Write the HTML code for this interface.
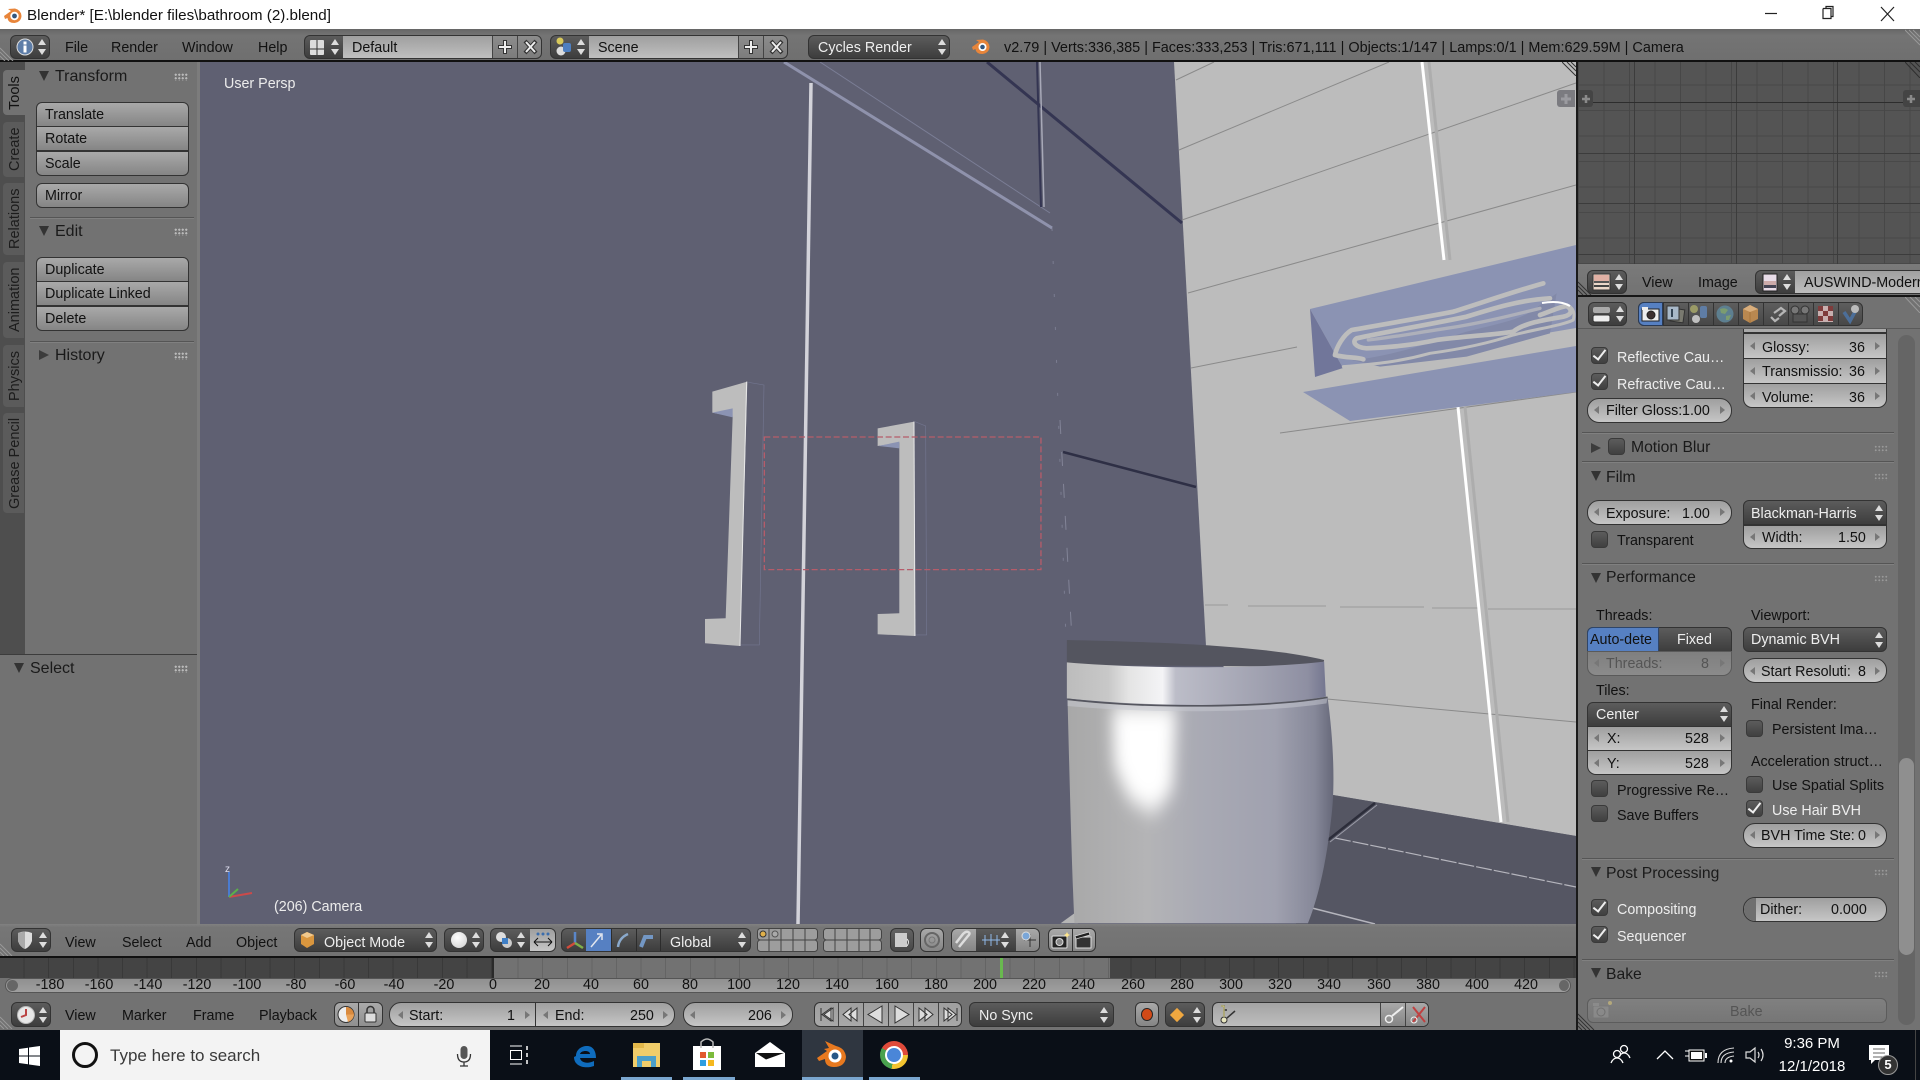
<!DOCTYPE html>
<html lang="en"><head><meta charset="utf-8"><title>Blender</title>
<style>
html,body{margin:0;padding:0;background:#727272}
#r{position:relative;width:1920px;height:1080px;overflow:hidden;background:#727272;font:14.3px "Liberation Sans",sans-serif;color:#111}
#r div,#r span,#r svg{position:absolute}
.t{white-space:nowrap;line-height:20px;height:20px}
.l{color:#eee}
.d{color:#555}
.tc{transform:translateX(-50%)}
.b{box-sizing:border-box;border:1px solid #333}
.g{background:linear-gradient(#a9a9a9,#858585)}
.n{background:linear-gradient(#9f9f9f,#c6c6c6)}
.k{background:linear-gradient(#5c5c5c,#3d3d3d)}
.m{background:linear-gradient(#636363,#484848)}
.rr{border-radius:6px}.pill{border-radius:12px}
.ud{width:8px;height:16px}
.ud:before,.ud:after{content:"";position:absolute;left:0;border-left:4px solid transparent;border-right:4px solid transparent}
.ud:before{top:0;border-bottom:6px solid #ddd}
.ud:after{bottom:0;border-top:6px solid #ddd}
.nl,.nr{width:0;height:0;border-top:4px solid transparent;border-bottom:4px solid transparent}
.nl{border-right:5px solid #777}.nr{border-left:5px solid #777}
.c{box-sizing:border-box;width:17px;height:17px;border-radius:4px;background:linear-gradient(#5c5c5c,#404040);border:1px solid #3a3a3a}
.c.on:after{content:"";position:absolute;left:4px;top:-1px;width:5px;height:11px;border-right:2.5px solid #eee;border-bottom:2.5px solid #eee;transform:rotate(38deg)}
.hr{height:1px;background:#555;box-shadow:0 1px 0 #808080}
.td{width:0;height:0;border-left:5px solid transparent;border-right:5px solid transparent;border-top:10px solid #333}
.tr{width:0;height:0;border-top:5px solid transparent;border-bottom:5px solid transparent;border-left:10px solid #3c3c3c}
.dots{width:14px;height:8px;background-image:radial-gradient(#bbb 1px,transparent 1.2px);background-size:3.5px 3.5px}
.dots.s{background-image:radial-gradient(#999 .9px,transparent 1.1px)}
.tab{left:3px;width:21px;background:#5b5b5b;border-radius:4px 0 0 4px}
.tab.a{background:#727272}
.vt{writing-mode:vertical-rl;transform:rotate(180deg);white-space:nowrap;left:5px;width:20px;line-height:20px;text-align:center;font-size:14.5px;color:#1c1c1c}
.h{font-size:16px;color:#1a1a1a}
.h2{font-size:15.700px;color:#1a1a1a}
</style></head><body><div id="r">

<!-- title bar -->
<div style="left:0;top:0;width:1920px;height:29px;background:#fff"></div>
<svg style="left:2px;top:4px" width="21" height="21" viewBox="0 0 21 21"><path d="M2 12 L9 7 L6 5 L13 4.500 Q19 6 19.500 12 Q19 18 12.500 19 Q6 19 5.500 14 L3 15 Z" fill="#e8853a"/><circle cx="12.500" cy="12" r="4.200" fill="#fff"/><circle cx="12.500" cy="12" r="2.400" fill="#33577f"/></svg>
<div class="t" style="left:27px;top:6px;font-size:15.200px;color:#111">Blender* [E:\blender files\bathroom (2).blend]</div>
<svg style="left:1760px;top:4px" width="140" height="22"><path d="M5 9.500H17" stroke="#222" stroke-width="1.200"/><path d="M63 4.500V14.500H71V4.500H63M66 4.500V2.500H73V12.500H71" fill="none" stroke="#222" stroke-width="1.200"/><path d="M121 3L134 17M134 3L121 17" stroke="#222" stroke-width="1.200"/></svg>

<!-- top header -->
<div style="left:0;top:29px;width:1920px;height:32px;background:linear-gradient(#666,#747474 20%,#6f6f6f)"></div>
<div style="left:0;top:60px;width:1920px;height:2px;background:#111"></div>
<svg style="left:0;top:47px" width="14" height="14"><path d="M0 1L13 14M0 5L9 14M0 9L5 14" stroke="#999" stroke-width="1"/></svg>
<svg style="left:1905px;top:29px" width="15" height="32"><path d="M0 1L15 16M4 1L15 12M8 1L15 8" stroke="#999" stroke-width="1"/></svg>
<div class="b k rr" style="left:10px;top:35px;width:40px;height:24px"></div>
<svg style="left:16px;top:38px" width="18" height="18"><circle cx="9" cy="9" r="8" fill="#5d7da8" stroke="#ddd"/><rect x="7.500" y="7.500" width="3" height="7" fill="#fff"/><rect x="7.500" y="3.500" width="3" height="3" fill="#fff"/></svg>
<span class="ud" style="left:38px;top:39px"></span>
<div class="t" style="left:65px;top:38px">File</div>
<div class="t" style="left:111px;top:38px">Render</div>
<div class="t" style="left:182px;top:38px">Window</div>
<div class="t" style="left:258px;top:38px">Help</div>
<div class="b k rr" style="left:304px;top:35px;width:238px;height:24px"></div>
<div style="left:343px;top:36px;width:149px;height:22px;background:linear-gradient(#9f9f9f,#bfbfbf)"></div>
<div style="left:492px;top:36px;width:49px;height:22px;background:linear-gradient(#8c8c8c,#7c7c7c);border-radius:0 5px 5px 0"></div>
<div class="t" style="left:352px;top:38px">Default</div>
<div style="left:492px;top:36px;width:1px;height:22px;background:#444"></div><div style="left:517px;top:36px;width:1px;height:22px;background:#444"></div>
<svg style="left:493px;top:36px" width="50" height="22"><path d="M12 4V18M5 11H19" stroke="#333" stroke-width="4"/><path d="M12 5V17M6 11H18" stroke="#eee" stroke-width="2"/><path d="M32 5L43 17M43 5L32 17" stroke="#333" stroke-width="4"/><path d="M33 6L42 16M42 6L33 16" stroke="#eee" stroke-width="2"/></svg>
<svg style="left:309px;top:39px" width="17" height="17"><rect x="1" y="1" width="14" height="15" rx="1" fill="#ddd"/><path d="M8 1V16M1 10H15" stroke="#333"/></svg>
<span class="ud" style="left:331px;top:39px"></span>
<div class="b k rr" style="left:550px;top:35px;width:238px;height:24px"></div>
<div style="left:589px;top:36px;width:149px;height:22px;background:linear-gradient(#9f9f9f,#bfbfbf)"></div>
<div style="left:738px;top:36px;width:49px;height:22px;background:linear-gradient(#8c8c8c,#7c7c7c);border-radius:0 5px 5px 0"></div>
<div class="t" style="left:598px;top:38px">Scene</div>
<div style="left:738px;top:36px;width:1px;height:22px;background:#444"></div><div style="left:763px;top:36px;width:1px;height:22px;background:#444"></div>
<svg style="left:739px;top:36px" width="50" height="22"><path d="M12 4V18M5 11H19" stroke="#333" stroke-width="4"/><path d="M12 5V17M6 11H18" stroke="#eee" stroke-width="2"/><path d="M32 5L43 17M43 5L32 17" stroke="#333" stroke-width="4"/><path d="M33 6L42 16M42 6L33 16" stroke="#eee" stroke-width="2"/></svg>
<svg style="left:555px;top:37px" width="20" height="20"><circle cx="6" cy="14" r="4.500" fill="#ddd"/><rect x="8" y="6" width="8" height="9" rx="2" fill="#4e7fc0"/><circle cx="5" cy="4" r="3.500" fill="#d8c95a"/></svg>
<span class="ud" style="left:577px;top:39px"></span>
<div class="b k rr" style="left:808px;top:35px;width:142px;height:24px"></div>
<div class="t l" style="left:818px;top:38px">Cycles Render</div>
<span class="ud" style="left:938px;top:39px"></span>
<svg style="left:971px;top:36px" width="21" height="20" viewBox="0 0 21 20"><path d="M1 11 L8 6 L5 4 L12 3.500 Q18 5 18.500 11 Q18 17 11.500 18 Q5 18 4.500 13 L2 14 Z" fill="#e8853a"/><circle cx="11.500" cy="11" r="4" fill="#fff"/><circle cx="11.500" cy="11" r="2.300" fill="#33577f"/></svg>
<div class="t" style="left:1004px;top:38px;font-size:14.450px">v2.79 | Verts:336,385 | Faces:333,253 | Tris:671,111 | Objects:1/147 | Lamps:0/1 | Mem:629.59M | Camera</div>

<!-- 3D viewport -->
<svg style="left:200px;top:62px" width="1376" height="862" viewBox="200 62 1376 862">
<defs>
<linearGradient id="lid" x1="0" x2="1" y1="0" y2="0"><stop offset="0" stop-color="#bcbcbc"/><stop offset=".16" stop-color="#c8c8c8"/><stop offset=".24" stop-color="#e4e4e4"/><stop offset=".37" stop-color="#f4f4f6"/><stop offset=".42" stop-color="#bcbdc8"/><stop offset=".75" stop-color="#a0a1b0"/><stop offset=".93" stop-color="#8e8fa2"/><stop offset="1" stop-color="#747690"/></linearGradient>
<linearGradient id="bod" x1="0" x2="1" y1="0" y2="0"><stop offset="0" stop-color="#a8a8a8"/><stop offset=".3" stop-color="#b4b4b6"/><stop offset=".5" stop-color="#a9aab4"/><stop offset=".78" stop-color="#a0a1af"/><stop offset=".93" stop-color="#868899"/><stop offset="1" stop-color="#666879"/></linearGradient>
<filter id="bl" x="-50%" y="-50%" width="200%" height="200%"><feGaussianBlur stdDeviation="22 32"/></filter>
</defs>
<rect x="200" y="62" width="1376" height="862" fill="#5f6072"/>
<polygon points="1174,62 1576,62 1576,836 1333,795 1206,646" fill="#bcbcbc"/>
<!-- wall lines -->
<g stroke="#8a8a8a" stroke-width="1" fill="none">
<path d="M1176 80L1214 62M1179 150L1389 62M1182 220L1576 83M1188 293L1576 185M1191 368L1297 347M1280 433L1576 392M1327 699L1576 722"/>
<path d="M1205 605H1228M1248 606H1326M1340 607H1424M1432 608H1478M1488 609H1576" stroke="#9a9a9a"/>
</g>
<!-- stripes -->
<path d="M1429 62L1450 260" stroke="#adadad" stroke-width="3"/>
<path d="M1422 62L1444 260" stroke="#fff" stroke-width="3"/>
<path d="M1465 407L1508 822" stroke="#adadad" stroke-width="3"/>
<path d="M1458 407L1501 822" stroke="#fff" stroke-width="3"/>
<!-- shelf -->
<polygon points="1310,309 1576,245 1576,328 1343,368" fill="#8b93b3"/>
<polygon points="1310,309 1343,368 1315,377" fill="#71769a"/>
<polygon points="1303,392 1576,346 1576,392 1350,421" fill="#8b93b3"/>
<g transform="translate(1280 260) scale(.3333)" fill="none" stroke="#bdbdbd" stroke-width="14" stroke-linejoin="round" stroke-linecap="round">
<path d="M215 300C300 295 420 260 560 215C640 195 720 180 760 150L830 100L810 220L560 290L300 320Z" fill="#8289a8" stroke="none"/>
<path d="M790 70C700 95 600 130 520 155C400 178 300 195 215 210C190 225 170 260 165 285C200 295 230 290 250 298"/>
<path d="M810 115C720 120 640 145 560 170C440 195 320 215 230 235C215 245 225 262 260 265C340 262 400 255 470 240C560 228 640 225 700 215C730 190 790 180 850 170C875 165 880 150 860 138C840 140 810 155 780 165"/>
<path d="M780 145C700 165 600 190 500 205C400 220 340 232 265 240" stroke="#aeb0ba" stroke-width="10"/>
<path d="M190 320C290 312 360 305 450 280C560 265 640 245 700 225C780 205 850 195 880 180C885 160 882 145 862 135" stroke-width="9"/>
</g>
<path d="M1542 303Q1560 300 1570 306" stroke="#fff" stroke-width="2" fill="none"/>
<!-- door lines -->
<path d="M820 62L1050 213" stroke="#7b7e96" stroke-width="1"/>
<path d="M784 62L1052 228" stroke="#8f92ac" stroke-width="3"/>
<path d="M811 83L798 924" stroke="#d3d3da" stroke-width="3.500"/>
<path d="M987 62L1182 223" stroke="#343552" stroke-width="3"/>
<path d="M1037 62L1041 207" stroke="#343552" stroke-width="2"/>
<path d="M1040 62L1044 207" stroke="#a8a9b8" stroke-width="1.500"/>
<path d="M1063 452L1196 487" stroke="#2e2f45" stroke-width="2.500"/>
<path d="M1052 228L1066 640" stroke="#8d8fa5" stroke-width="1" stroke-dasharray="3 30" opacity=".6"/>
<path d="M1060 420L1072 640" stroke="#9a9cb0" stroke-width="1" stroke-dasharray="14 18" opacity=".6"/>
<!-- handles -->
<g transform="translate(660 340) scale(.3333)">
<path d="M265 127L312 135L298 915H240" fill="none" stroke="#72758f" stroke-width="2"/>
<polygon points="157,155 262,125 240,918 135,910 135,837 197,835 218,230 157,218" fill="#bdbdbd"/>
<polygon points="157,218 218,205 218,232" fill="#8b93b3"/>
<path d="M260 125L240 918" stroke="#e8e8e8" stroke-width="3"/>
<path d="M765 245L797 258L800 885H765" fill="none" stroke="#72758f" stroke-width="2"/>
<polygon points="653,265 763,245 765,888 653,883 653,822 718,820 718,308 653,318" fill="#bdbdbd"/>
<polygon points="655,318 718,305 718,325" fill="#8b93b3"/>
<path d="M762 245L765 888" stroke="#e8e8e8" stroke-width="3"/>
<rect x="313" y="291" width="830" height="398" fill="none" stroke="#b65c6a" stroke-width="4" stroke-dasharray="18 8"/>
</g>
<!-- floor -->
<polygon points="1333,795 1576,836 1576,924 1296,924 1320,800" fill="#555663"/>
<path d="M1335 838L1576 887" stroke="#b5b5bd" stroke-width="1.200" stroke-dasharray="16 2"/>
<path d="M1312 908L1375 924" stroke="#b5b5bd" stroke-width="1.500"/>
<path d="M1328 840L1375 803" stroke="#2c2d3a" stroke-width="2.500"/>
<path d="M1330 842L1377 805" stroke="#9b9ca8" stroke-width="1"/>
<!-- toilet -->
<g transform="translate(1040 600) scale(.3444 .3333)">
<path d="M78 120C300 125 650 135 825 180L820 200L78 195Z" fill="#54555f"/>
<path d="M100 940L60 970H110Z" fill="#b5b5b5"/>
<path d="M80 300C300 325 650 325 835 292C852 420 858 560 845 660C830 800 805 900 778 970H100C92 800 85 500 80 300Z" fill="url(#bod)"/>
<path d="M210 320L395 320L385 570L330 640L260 600L215 500Z" fill="#fff" filter="url(#bl)"/>
<path d="M80 300C300 325 650 325 835 292L832 310C650 340 300 340 80 318Z" fill="#c8c9d2" opacity=".5"/>
<path d="M78 187C300 207 650 207 825 185L830 290C650 325 300 320 78 295Z" fill="url(#lid)"/>
<path d="M80 298C300 325 650 325 835 292" fill="none" stroke="#55565f" stroke-width="5"/>
</g>
<!-- axis -->
<g fill="none" stroke-width="2"><path d="M229 897V872" stroke="#4a7bd0"/><path d="M229 897L252 893" stroke="#cc4a4a"/><path d="M229 897L238 889" stroke="#5bb04a"/></g>
</svg>
<div class="t" style="left:224px;top:74px;color:#ececec">User Persp</div>
<div class="t" style="left:225px;top:860px;font-size:10px;color:#dde">z</div>
<div class="t" style="left:274px;top:897px;color:#ececec">(206) Camera</div>
<div style="left:1557px;top:90px;width:18px;height:17px;background:#7b7b80;border-radius:3px 0 0 3px"></div>
<svg style="left:1560px;top:93px" width="12" height="12"><path d="M6 1V11M1 6H11" stroke="#9b9ba0" stroke-width="3"/></svg>
<svg style="left:1562px;top:62px" width="14" height="14"><path d="M0 0L14 14M5 0L14 9M9 0L14 5" stroke="#333" stroke-width="1"/></svg>

<!-- left tool shelf -->
<div style="left:0;top:62px;width:198px;height:592px;background:#727272"></div>
<div style="left:197px;top:62px;width:3px;height:862px;background:#7c7c7c"></div>
<div style="left:0;top:62px;width:25px;height:592px;background:#4e4e4e"></div>
<div style="left:25px;top:62px;width:172px;height:592px;background:#727272"></div>
<div class="tab" style="top:122px;height:55px"></div>
<div class="tab" style="top:183px;height:72px"></div>
<div class="tab" style="top:262px;height:76px"></div>
<div class="tab" style="top:345px;height:62px"></div>
<div class="tab" style="top:413px;height:100px"></div>
<div class="tab a" style="top:70px;height:45px;width:22px"></div>
<div class="vt" style="top:72px;height:42px;color:#111">Tools</div>
<div class="vt" style="top:124px;height:50px">Create</div>
<div class="vt" style="top:186px;height:66px">Relations</div>
<div class="vt" style="top:265px;height:70px">Animation</div>
<div class="vt" style="top:349px;height:54px">Physics</div>
<div class="vt" style="top:416px;height:94px">Grease Pencil</div>

<div class="td" style="left:39px;top:71px"></div>
<div class="t h" style="left:55px;top:67px">Transform</div>
<div class="dots" style="left:174px;top:73px"></div>
<div class="b g" style="left:36px;top:102px;width:153px;height:25px;border-radius:6px 6px 0 0"></div>
<div class="b g" style="left:36px;top:126px;width:153px;height:25px"></div>
<div class="b g" style="left:36px;top:151px;width:153px;height:25px;border-radius:0 0 6px 6px"></div>
<div class="t" style="left:45px;top:105px">Translate</div>
<div class="t" style="left:45px;top:129px">Rotate</div>
<div class="t" style="left:45px;top:154px">Scale</div>
<div class="b g rr" style="left:36px;top:183px;width:153px;height:25px"></div>
<div class="t" style="left:45px;top:186px">Mirror</div>
<div class="hr" style="left:30px;top:217px;width:164px"></div>
<div class="td" style="left:39px;top:226px"></div>
<div class="t h" style="left:55px;top:222px">Edit</div>
<div class="dots" style="left:174px;top:228px"></div>
<div class="b g" style="left:36px;top:257px;width:153px;height:25px;border-radius:6px 6px 0 0"></div>
<div class="b g" style="left:36px;top:281px;width:153px;height:25px"></div>
<div class="b g" style="left:36px;top:306px;width:153px;height:25px;border-radius:0 0 6px 6px"></div>
<div class="t" style="left:45px;top:260px">Duplicate</div>
<div class="t" style="left:45px;top:284px">Duplicate Linked</div>
<div class="t" style="left:45px;top:309px">Delete</div>
<div class="hr" style="left:30px;top:341px;width:164px"></div>
<div class="tr" style="left:39px;top:350px"></div>
<div class="t h" style="left:55px;top:346px">History</div>
<div class="dots" style="left:174px;top:352px"></div>

<!-- select panel -->
<div style="left:0;top:654px;width:197px;height:270px;background:#727272;border-top:1px solid #3c3c3c;box-sizing:border-box"></div>
<div class="td" style="left:14px;top:663px"></div>
<div class="t h" style="left:30px;top:659px">Select</div>
<div class="dots" style="left:174px;top:665px"></div>

<!-- 3D header -->
<div style="left:0;top:924px;width:1577px;height:33px;background:linear-gradient(#808080,#767676 10%,#727272)"></div>
<div style="left:0;top:956px;width:1577px;height:2px;background:#111"></div>
<svg style="left:0;top:943px" width="13" height="13"><path d="M0 1L12 13M0 5L8 13M0 9L4 13" stroke="#999"/></svg>
<div class="b k rr" style="left:11px;top:928px;width:40px;height:24px"></div>
<svg style="left:15px;top:930px" width="20" height="20"><path d="M3 3Q10 0 17 3V11Q15 17 10 19Q5 17 3 11Z" fill="#ddd"/><path d="M10 1.500V19Q5 17 3 11V3Z" fill="#aaa"/></svg>
<span class="ud" style="left:39px;top:932px"></span>
<div class="t" style="left:65px;top:933px">View</div>
<div class="t" style="left:122px;top:933px">Select</div>
<div class="t" style="left:186px;top:933px">Add</div>
<div class="t" style="left:236px;top:933px">Object</div>
<div class="b k rr" style="left:294px;top:928px;width:143px;height:24px"></div>
<svg style="left:299px;top:931px" width="17" height="18"><path d="M8 1L15 4V13L8 17L2 13V4Z" fill="#d9963e"/><path d="M2 4L8 7L15 4L8 1Z" fill="#f0c88c"/></svg>
<div class="t l" style="left:324px;top:933px">Object Mode</div>
<span class="ud" style="left:425px;top:932px"></span>
<div class="b k rr" style="left:444px;top:928px;width:40px;height:24px"></div>
<div style="left:451px;top:932px;width:16px;height:16px;border-radius:50%;background:radial-gradient(circle at 40% 35%,#fff,#ccc)"></div>
<span class="ud" style="left:472px;top:932px"></span>
<div class="b k rr" style="left:490px;top:928px;width:66px;height:24px"></div>
<div class="n" style="left:530px;top:929px;width:25px;height:22px;border-radius:0 5px 5px 0"></div>
<svg style="left:495px;top:931px" width="18" height="18"><circle cx="6" cy="6" r="5" fill="#ddd"/><circle cx="12" cy="12" r="5" fill="#ccc"/><rect x="7" y="7" width="6" height="6" fill="#3f7fc6"/></svg>
<span class="ud" style="left:517px;top:932px"></span>
<svg style="left:531px;top:931px" width="24" height="18"><path d="M3 11H21M3 11L7 7M3 11L7 15M21 11L17 7M21 11L17 15" stroke="#111" fill="none"/><circle cx="7" cy="3" r="1.500" fill="#3b6dad"/><circle cx="12" cy="3" r="1.500" fill="#3b6dad"/><circle cx="17" cy="3" r="1.500" fill="#3b6dad"/></svg>
<div class="b k rr" style="left:561px;top:928px;width:190px;height:24px"></div>
<div style="left:586px;top:929px;width:25px;height:22px;background:#5680c2"></div>
<svg style="left:563px;top:930px" width="96" height="20"><path d="M12 2V13" stroke="#5a86c8" stroke-width="2.500"/><path d="M12 13L4 18" stroke="#d24b3a" stroke-width="2.500"/><path d="M12 13L20 18" stroke="#7fb04a" stroke-width="2.500"/><path d="M28 17L38 5M34 4H39V10" stroke="#e2e6ee" fill="none" stroke-width="1.500"/><path d="M55 17Q56 8 65 4" stroke="#8aa9cc" fill="none" stroke-width="2.500"/><path d="M78 17L82 7H90" stroke="#7397c4" fill="none" stroke-width="4"/></svg>
<div style="left:611px;top:929px;width:1px;height:22px;background:#2c2c2c"></div><div style="left:636px;top:929px;width:1px;height:22px;background:#2c2c2c"></div><div style="left:660px;top:929px;width:1px;height:22px;background:#2c2c2c"></div>
<div class="t l" style="left:670px;top:933px">Global</div>
<span class="ud" style="left:738px;top:932px"></span>
<svg style="left:757px;top:928px" width="130" height="24" fill="#9d9d9d" stroke="#444"><rect x=".5" y=".5" width="60" height="11.500" rx="3"/><rect x=".5" y="12" width="60" height="11.500" rx="3"/><path d="M12 1V23M24 1V23M36 1V23M48 1V23"/><rect x="66.500" y=".5" width="58" height="11.500" rx="3"/><rect x="66.500" y="12" width="58" height="11.500" rx="3"/><path d="M78 1V23M90 1V23M102 1V23M113 1V23"/><circle cx="6" cy="6" r="3" fill="#e0b04a" stroke="#333"/><circle cx="18" cy="6" r="3" fill="#aaa" stroke="#555"/></svg>
<div class="b m rr" style="left:890px;top:928px;width:24px;height:24px"></div>
<svg style="left:893px;top:931px" width="18" height="18"><rect x="2" y="2" width="12" height="14" fill="#ccc"/><path d="M14 8Q17 11 14 15" stroke="#eee" fill="none"/></svg>
<div class="b g rr" style="left:920px;top:928px;width:24px;height:24px"></div>
<svg style="left:923px;top:931px" width="18" height="18"><circle cx="9" cy="9" r="7" fill="none" stroke="#666" stroke-width="2"/><circle cx="9" cy="9" r="3" fill="none" stroke="#777"/></svg>
<div class="b k rr" style="left:951px;top:928px;width:89px;height:24px"></div>
<div class="g" style="left:952px;top:929px;width:24px;height:22px;border-radius:5px 0 0 5px"></div>
<div class="g" style="left:1016px;top:929px;width:23px;height:22px;border-radius:0 5px 5px 0"></div>
<svg style="left:952px;top:930px" width="88" height="20"><path d="M7 17L16 6Q19 3 16 2Q14 1 11 4L4 13" stroke="#ddd" fill="none" stroke-width="2.500"/><path d="M30 10H48M33 5V15M39 4V16M45 5V15" stroke="#8fb8e8" fill="none"/><path d="M72 10H84M78 4V17" stroke="#333"/><circle cx="74" cy="6" r="4" fill="#7aa6d8" stroke="#ddd"/></svg>
<span class="ud" style="left:1001px;top:932px"></span>
<div class="b g rr" style="left:1048px;top:928px;width:48px;height:24px"></div>
<div style="left:1072px;top:929px;width:1px;height:22px;background:#333"></div>
<svg style="left:1051px;top:930px" width="44" height="20"><rect x="1" y="6" width="15" height="12" rx="1" fill="#222" stroke="#ddd"/><circle cx="8.500" cy="12" r="3.500" fill="#888" stroke="#ddd"/><path d="M16 2l1 2 2 1-2 1-1 2-1-2-2-1 2-1z" fill="#ffe58a"/><rect x="25" y="7" width="15" height="11" fill="#333" stroke="#ddd"/><path d="M24 6L38 2L39 5L25 9Z" fill="#222" stroke="#ddd" stroke-width=".7"/></svg>

<!-- timeline -->
<div style="left:0;top:958px;width:1577px;height:20px;background:#444"></div>
<div style="left:0;top:958px;width:1577px;height:20px;background:repeating-linear-gradient(90deg,transparent 0 23.600px,rgba(0,0,0,.16) 23.600px 24.600px)"></div>
<div style="left:493px;top:958px;width:617px;height:20px;background:#727272"></div>
<div style="left:493px;top:958px;width:617px;height:20px;background:repeating-linear-gradient(90deg,rgba(0,0,0,.12) 0 1px,transparent 1px 24.600px)"></div>
<div style="left:492px;top:958px;width:2px;height:20px;background:#2a2a2a"></div>
<div style="left:1000px;top:958px;width:3px;height:20px;background:#69b94f"></div>
<div style="left:0;top:978px;width:1577px;height:17px;background:#727272"></div>
<div class="b" style="left:5px;top:978px;width:1566px;height:15px;border-radius:8px;background:linear-gradient(#909090,#9f9f9f);border-color:#555"></div>
<div style="left:7px;top:980px;width:11px;height:11px;border-radius:50%;background:#666"></div>
<div style="left:1559px;top:980px;width:10px;height:11px;border-radius:50%;background:#666"></div>
<div class="t tc" style="left:50px;top:975px">-180</div><div class="t tc" style="left:99px;top:975px">-160</div><div class="t tc" style="left:148px;top:975px">-140</div><div class="t tc" style="left:197px;top:975px">-120</div><div class="t tc" style="left:247px;top:975px">-100</div><div class="t tc" style="left:296px;top:975px">-80</div><div class="t tc" style="left:345px;top:975px">-60</div><div class="t tc" style="left:394px;top:975px">-40</div><div class="t tc" style="left:444px;top:975px">-20</div><div class="t tc" style="left:493px;top:975px">0</div><div class="t tc" style="left:542px;top:975px">20</div><div class="t tc" style="left:591px;top:975px">40</div><div class="t tc" style="left:641px;top:975px">60</div><div class="t tc" style="left:690px;top:975px">80</div><div class="t tc" style="left:739px;top:975px">100</div><div class="t tc" style="left:788px;top:975px">120</div><div class="t tc" style="left:837px;top:975px">140</div><div class="t tc" style="left:887px;top:975px">160</div><div class="t tc" style="left:936px;top:975px">180</div><div class="t tc" style="left:985px;top:975px">200</div><div class="t tc" style="left:1034px;top:975px">220</div><div class="t tc" style="left:1083px;top:975px">240</div><div class="t tc" style="left:1133px;top:975px">260</div><div class="t tc" style="left:1182px;top:975px">280</div><div class="t tc" style="left:1231px;top:975px">300</div><div class="t tc" style="left:1280px;top:975px">320</div><div class="t tc" style="left:1329px;top:975px">340</div><div class="t tc" style="left:1379px;top:975px">360</div><div class="t tc" style="left:1428px;top:975px">380</div><div class="t tc" style="left:1477px;top:975px">400</div><div class="t tc" style="left:1526px;top:975px">420</div>

<!-- timeline header -->
<div style="left:0;top:995px;width:1577px;height:35px;background:#727272"></div>
<svg style="left:0;top:1016px" width="13" height="13"><path d="M0 1L12 13M0 5L8 13M0 9L4 13" stroke="#999"/></svg>
<div class="b k rr" style="left:11px;top:1002px;width:40px;height:25px"></div>
<svg style="left:16px;top:1005px" width="20" height="20"><circle cx="10" cy="10" r="8.500" fill="#e8e8e8" stroke="#bbb"/><path d="M10 4V10L5 12" stroke="#b44" fill="none" stroke-width="2"/></svg>
<span class="ud" style="left:39px;top:1007px"></span>
<div class="t" style="left:65px;top:1006px">View</div>
<div class="t" style="left:122px;top:1006px">Marker</div>
<div class="t" style="left:193px;top:1006px">Frame</div>
<div class="t" style="left:259px;top:1006px">Playback</div>
<div class="b n rr" style="left:334px;top:1002px;width:49px;height:25px;background:linear-gradient(#aaa,#8f8f8f)"></div>
<div style="left:358px;top:1003px;width:1px;height:23px;background:#333"></div>
<svg style="left:336px;top:1004px" width="46" height="21"><circle cx="10" cy="10.500" r="8" fill="#eee" stroke="#333"/><path d="M10 10.500V3A8 8 0 0 1 18 10.500Z" fill="#d98a3e"/><path d="M10 10.500L18 10.500A8 8 0 0 1 12 18Z" fill="#e9a35a"/><rect x="29" y="9" width="11" height="9" rx="1" fill="#ddd" stroke="#333"/><path d="M31 9V6A3.500 3.500 0 0 1 38 6V9" fill="none" stroke="#333" stroke-width="1.500"/></svg>
<div class="b n pill" style="left:389px;top:1002px;width:286px;height:25px"></div>
<div style="left:535px;top:1003px;width:1px;height:23px;background:#333"></div>
<span class="nl" style="left:398px;top:1011px"></span><span class="nr" style="left:525px;top:1011px"></span><span class="nl" style="left:543px;top:1011px"></span><span class="nr" style="left:663px;top:1011px"></span>
<div class="t" style="left:409px;top:1006px">Start:</div><div class="t" style="left:507px;top:1006px">1</div>
<div class="t" style="left:555px;top:1006px">End:</div><div class="t" style="left:630px;top:1006px">250</div>
<div class="b n pill" style="left:683px;top:1002px;width:110px;height:25px"></div>
<span class="nl" style="left:690px;top:1011px"></span><span class="nr" style="left:781px;top:1011px"></span>
<div class="t" style="left:748px;top:1006px">206</div>
<div class="b n rr" style="left:814px;top:1002px;width:148px;height:25px;background:linear-gradient(#9f9f9f,#a8a8a8)"></div>
<svg style="left:814px;top:1003px" width="148" height="23"><path d="M24.500 0V23M49.500 0V23M74.500 0V23M99.500 0V23M124.500 0V23" stroke="#444"/><g fill="#ddd" stroke="#333"><path d="M7 5V18M19 5L10 11.500L19 18ZM17 5L8 11.500L17 18Z"/><path d="M43 5L35 11.500L43 18ZM37 5L29 11.500L37 18Z"/><path d="M68 3L54 11.500L68 20Z"/><path d="M81 3L95 11.500L81 20Z"/><path d="M105 5L113 11.500L105 18ZM111 5L119 11.500L111 18Z"/><path d="M130 5L138 11.500L130 18ZM134 5L142 11.500L134 18ZM143 5V18"/></g></svg>
<div class="b k rr" style="left:969px;top:1002px;width:145px;height:25px"></div>
<div class="t l" style="left:979px;top:1006px">No Sync</div>
<span class="ud" style="left:1100px;top:1007px"></span>
<div class="b g rr" style="left:1135px;top:1002px;width:24px;height:25px"></div>
<div style="left:1141px;top:1008px;width:12px;height:13px;border-radius:50%;background:#d14a18;border:1px solid #222;box-sizing:border-box"></div>
<div class="b k rr" style="left:1165px;top:1002px;width:40px;height:25px"></div>
<div style="left:1172px;top:1010px;width:10px;height:10px;background:#f0a840;transform:rotate(45deg)"></div>
<span class="ud" style="left:1193px;top:1007px"></span>
<div class="b rr" style="left:1212px;top:1002px;width:217px;height:25px;background:linear-gradient(#a3a3a3,#bebebe)"></div>
<div class="g" style="left:1381px;top:1003px;width:47px;height:23px;border-radius:0 5px 5px 0"></div>
<div style="left:1380px;top:1003px;width:1px;height:23px;background:#444"></div><div style="left:1405px;top:1003px;width:1px;height:23px;background:#444"></div>
<svg style="left:1216px;top:1004px" width="212" height="21"><circle cx="8" cy="16" r="3" fill="#e8e6c0" stroke="#333"/><path d="M8 13V2H5M8 6H11M11 14L19 7" stroke="#333" fill="none" stroke-width="1.500"/><path d="M8 13V2H5" stroke="#e8df80" fill="none"/><circle cx="173" cy="15" r="3.500" fill="none" stroke="#eee" stroke-width="1.500"/><path d="M176 12L187 3" stroke="#eee" stroke-width="2"/><path d="M197 3L209 18M209 3L197 18" stroke="#c04040" stroke-width="2"/><circle cx="198" cy="16" r="3" fill="none" stroke="#eee"/></svg>

<!-- right column image editor -->
<div style="left:1576px;top:62px;width:2px;height:968px;background:#1a1a1a"></div>
<div style="left:1578px;top:62px;width:342px;height:202px;background-color:#545454;background-image:repeating-linear-gradient(90deg,#474747 0 1px,transparent 1px 25.500px),repeating-linear-gradient(0deg,#494949 0 1px,transparent 1px 25.500px)"></div>
<div style="left:1634px;top:62px;width:1px;height:202px;background:#3c3c3c"></div><div style="left:1736px;top:62px;width:1px;height:202px;background:#3c3c3c"></div><div style="left:1837px;top:62px;width:1px;height:202px;background:#3c3c3c"></div>
<div style="left:1578px;top:102px;width:342px;height:1px;background:#2d2d2d"></div><div style="left:1578px;top:153px;width:342px;height:1px;background:#3c3c3c"></div><div style="left:1578px;top:203px;width:342px;height:1px;background:#3c3c3c"></div><div style="left:1578px;top:254px;width:342px;height:1px;background:#3c3c3c"></div>
<div style="left:1578px;top:90px;width:15px;height:17px;background:#444;border-radius:0 3px 3px 0"></div>
<div style="left:1903px;top:90px;width:17px;height:17px;background:#444;border-radius:3px 0 0 3px"></div>
<svg style="left:1580px;top:93px" width="12" height="12"><path d="M6 2V10M2 6H10" stroke="#8a8a8a" stroke-width="2.500"/></svg>
<svg style="left:1905px;top:93px" width="12" height="12"><path d="M6 2V10M2 6H10" stroke="#8a8a8a" stroke-width="2.500"/></svg>
<svg style="left:1905px;top:62px" width="15" height="16"><path d="M0 0L15 16M5 0L15 10M10 0L15 5" stroke="#2e2e2e"/></svg>
<div style="left:1578px;top:264px;width:342px;height:32px;background:linear-gradient(#7a7a7a,#727272)"></div>
<div style="left:1578px;top:295px;width:342px;height:2px;background:#161616"></div>
<svg style="left:1578px;top:280px" width="14" height="15"><path d="M0 2L13 15M0 6L9 15M0 10L5 15" stroke="#333"/></svg>
<div class="b k rr" style="left:1587px;top:270px;width:40px;height:24px"></div>
<svg style="left:1592px;top:273px" width="20" height="18"><rect x="1" y="1" width="17" height="16" fill="#ead6c8" stroke="#333"/><rect x="2" y="2" width="15" height="6" fill="#e0b0a4"/><rect x="2" y="8" width="15" height="2" fill="#555"/><rect x="2" y="12" width="15" height="2" fill="#444"/></svg>
<span class="ud" style="left:1615px;top:274px"></span>
<div class="t" style="left:1642px;top:273px">View</div>
<div class="t" style="left:1698px;top:273px">Image</div>
<div class="b k" style="left:1755px;top:270px;width:170px;height:24px;border-radius:6px 0 0 6px"></div>
<div style="left:1795px;top:271px;width:125px;height:22px;background:linear-gradient(#a0a0a0,#bebebe)"></div>
<svg style="left:1761px;top:272px" width="19" height="20"><rect x="2" y="2" width="14" height="17" fill="#e8dce8" stroke="#222"/><rect x="3" y="9" width="12" height="4" fill="#caa"/><rect x="3" y="13" width="12" height="3" fill="#445"/></svg>
<span class="ud" style="left:1783px;top:274px"></span>
<div style="left:1795px;top:271px;width:125px;height:22px;overflow:hidden"><div class="t" style="left:9px;top:2px">AUSWIND-Modern</div></div>

<!-- properties -->
<div style="left:1578px;top:297px;width:342px;height:733px;background:#727272"></div>
<svg style="left:1905px;top:297px" width="15" height="16"><path d="M0 0L15 16M5 0L15 10M10 0L15 5" stroke="#999"/></svg>
<div class="b k rr" style="left:1588px;top:302px;width:39px;height:24px"></div>
<svg style="left:1592px;top:306px" width="20" height="17"><rect x="1" y="1" width="17" height="6" rx="2" fill="#aaa"/><rect x="1" y="9" width="17" height="7" rx="2" fill="#eee" stroke="#333"/></svg>
<span class="ud" style="left:1616px;top:306px"></span>
<div class="b k rr" style="left:1638px;top:302px;width:225px;height:24px;background:linear-gradient(#5e5e5e,#484848)"></div>
<div style="left:1638px;top:302px;width:25px;height:24px;background:#5680c2;border-radius:6px 0 0 6px;box-sizing:border-box;border:1px solid #2a3a55"></div>
<svg style="left:1638px;top:302px" width="225" height="24">
<path d="M50.500 1V23M75.500 1V23M100.500 1V23M125.500 1V23M150.500 1V23M175.500 1V23M200.500 1V23M25.500 1V23" stroke="#333"/>
<rect x="4" y="7" width="17" height="12" fill="#eee" stroke="#222"/><rect x="4" y="5" width="6" height="3" fill="#eee"/><circle cx="13" cy="13" r="4" fill="#3c3030" stroke="#222"/>
<rect x="33" y="7" width="13" height="13" fill="#7a7a70" stroke="#333" transform="rotate(8 40 13)"/><rect x="29" y="4" width="12" height="14" fill="#a8b8c8" stroke="#333"/><path d="M34 7v8" stroke="#345" stroke-width="2"/>
<circle cx="56" cy="7" r="4" fill="#9a9a66"/><rect x="62" y="4" width="7" height="12" rx="2" fill="#5f7da5"/><circle cx="58" cy="17" r="4" fill="#c0c0c0"/>
<circle cx="87" cy="12" r="8.500" fill="#5d7f90"/><path d="M82 7q5-2 8 1l-3 4-4-1zM88 14l5-1-2 5-3 0z" fill="#7b9c70"/>
<path d="M112 3L120 7V17L112 21L105 17V7Z" fill="#b98850"/><path d="M105 7L112 10L120 7L112 3Z" fill="#d9ae7c"/><path d="M112 10V21" stroke="#a8743a"/>
<path d="M133 15L137 19L141 16M136 11L143 6L147 9L141 14" fill="none" stroke="#b5b5b5" stroke-width="2.200"/>
<circle cx="157" cy="8" r="4" fill="#777" stroke="#333"/><circle cx="167" cy="8" r="4" fill="#777" stroke="#333"/><rect x="155" y="12" width="14" height="8" fill="#555" stroke="#333"/>
<rect x="180" y="4" width="15" height="16" fill="#c8b0b0"/><path d="M180 4h5v5h-5zM190 4h5v5h-5zM185 9h5v5h-5zM180 14h5v5h-5zM190 14h5v5h-5z" fill="#7f3c3c"/>
<path d="M206 10L212 19L219 6" fill="none" stroke="#4c6e98" stroke-width="3.500"/><circle cx="217" cy="7" r="4" fill="#bbb"/>
</svg>
<div style="left:1578px;top:328px;width:342px;height:1px;background:#5a5a5a"></div>

<div class="b" style="left:1743px;top:329px;width:144px;height:4px;background:#aaa;border-top:0"></div>
<div class="b n" style="left:1743px;top:333px;width:144px;height:26px"></div>
<div class="b n" style="left:1743px;top:358px;width:144px;height:26px"></div>
<div class="b n" style="left:1743px;top:383px;width:144px;height:25px;border-radius:0 0 9px 9px"></div>
<span class="nl" style="left:1750px;top:342px"></span><span class="nr" style="left:1875px;top:342px"></span><span class="nl" style="left:1750px;top:367px"></span><span class="nr" style="left:1875px;top:367px"></span><span class="nl" style="left:1750px;top:392px"></span><span class="nr" style="left:1875px;top:392px"></span>
<div class="t" style="left:1762px;top:338px">Glossy:</div><div class="t" style="left:1849px;top:338px">36</div>
<div class="t" style="left:1762px;top:362px">Transmissio:</div><div class="t" style="left:1849px;top:362px">36</div>
<div class="t" style="left:1762px;top:388px">Volume:</div><div class="t" style="left:1849px;top:388px">36</div>

<div class="c on" style="left:1591px;top:347px"></div><div class="t l" style="left:1617px;top:348px">Reflective Cau…</div>
<div class="c on" style="left:1591px;top:373px"></div><div class="t l" style="left:1617px;top:375px">Refractive Cau…</div>
<div class="b n pill" style="left:1587px;top:398px;width:145px;height:25px"></div>
<span class="nl" style="left:1594px;top:406px"></span><span class="nr" style="left:1720px;top:406px"></span>
<div class="t" style="left:1606px;top:401px">Filter Gloss:</div><div class="t" style="left:1682px;top:401px">1.00</div>
<div class="hr" style="left:1582px;top:432px;width:312px"></div>
<div class="tr" style="left:1591px;top:443px"></div>
<div class="c" style="left:1608px;top:438px"></div>
<div class="t h2" style="left:1631px;top:438px">Motion Blur</div>
<div class="dots s" style="left:1874px;top:445px"></div>
<div class="hr" style="left:1582px;top:461px;width:312px"></div>
<div class="td" style="left:1591px;top:471px"></div>
<div class="t h2" style="left:1606px;top:468px">Film</div>
<div class="dots s" style="left:1874px;top:473px"></div>
<div class="b n pill" style="left:1587px;top:500px;width:145px;height:25px"></div>
<span class="nl" style="left:1594px;top:508px"></span><span class="nr" style="left:1720px;top:508px"></span>
<div class="t" style="left:1606px;top:504px">Exposure:</div><div class="t" style="left:1682px;top:504px">1.00</div>
<div class="b k" style="left:1743px;top:500px;width:144px;height:25px;border-radius:6px 6px 0 0"></div>
<div class="t l" style="left:1751px;top:504px">Blackman-Harris</div><span class="ud" style="left:1875px;top:505px"></span>
<div class="b n" style="left:1743px;top:525px;width:144px;height:24px;border-radius:0 0 9px 9px"></div>
<span class="nl" style="left:1750px;top:533px"></span><span class="nr" style="left:1875px;top:533px"></span>
<div class="t" style="left:1762px;top:528px">Width:</div><div class="t" style="left:1838px;top:528px">1.50</div>
<div class="c" style="left:1591px;top:531px"></div><div class="t" style="left:1617px;top:531px">Transparent</div>
<div class="hr" style="left:1582px;top:563px;width:312px"></div>
<div class="td" style="left:1591px;top:573px"></div>
<div class="t h2" style="left:1606px;top:568px">Performance</div>
<div class="dots s" style="left:1874px;top:575px"></div>
<div class="t" style="left:1596px;top:606px">Threads:</div>
<div class="t" style="left:1751px;top:606px">Viewport:</div>
<div class="b k" style="left:1587px;top:627px;width:145px;height:25px;border-radius:6px 6px 0 0"></div>
<div class="b" style="left:1587px;top:627px;width:72px;height:25px;background:#5680c2;border-radius:6px 0 0 0;border-color:#2f4568"></div>
<div class="t" style="left:1590px;top:630px;color:#111">Auto-dete</div>
<div class="t l" style="left:1677px;top:630px">Fixed</div>
<div class="b k rr" style="left:1743px;top:627px;width:144px;height:25px"></div>
<div class="t l" style="left:1751px;top:630px">Dynamic BVH</div><span class="ud" style="left:1875px;top:632px"></span>
<div class="b" style="left:1587px;top:651px;width:145px;height:25px;border-radius:0 0 9px 9px;background:linear-gradient(#7f7f7f,#8b8b8b);border-color:#5a5a5a"></div>
<span class="nl" style="left:1594px;top:659px"></span><span class="nr" style="left:1720px;top:659px"></span>
<div class="t d" style="left:1606px;top:654px">Threads:</div><div class="t d" style="left:1701px;top:654px">8</div>
<div class="b n pill" style="left:1743px;top:658px;width:144px;height:25px"></div>
<span class="nl" style="left:1750px;top:667px"></span><span class="nr" style="left:1875px;top:667px"></span>
<div class="t" style="left:1761px;top:662px">Start Resoluti:</div><div class="t" style="left:1858px;top:662px">8</div>
<div class="t" style="left:1596px;top:681px">Tiles:</div>
<div class="b k" style="left:1587px;top:702px;width:145px;height:25px;border-radius:6px 6px 0 0"></div>
<div class="t l" style="left:1596px;top:705px">Center</div><span class="ud" style="left:1720px;top:706px"></span>
<div class="b n" style="left:1587px;top:726px;width:145px;height:25px"></div>
<div class="b n" style="left:1587px;top:750px;width:145px;height:25px;border-radius:0 0 9px 9px"></div>
<span class="nl" style="left:1594px;top:734px"></span><span class="nr" style="left:1720px;top:734px"></span><span class="nl" style="left:1594px;top:759px"></span><span class="nr" style="left:1720px;top:759px"></span>
<div class="t" style="left:1607px;top:729px">X:</div><div class="t" style="left:1685px;top:729px">528</div>
<div class="t" style="left:1607px;top:754px">Y:</div><div class="t" style="left:1685px;top:754px">528</div>
<div class="c" style="left:1591px;top:780px"></div><div class="t" style="left:1617px;top:781px">Progressive Re…</div>
<div class="c" style="left:1591px;top:805px"></div><div class="t" style="left:1617px;top:806px">Save Buffers</div>
<div class="t" style="left:1751px;top:695px">Final Render:</div>
<div class="c" style="left:1746px;top:720px"></div><div class="t" style="left:1772px;top:720px">Persistent Ima…</div>
<div class="t" style="left:1751px;top:752px">Acceleration struct…</div>
<div class="c" style="left:1746px;top:776px"></div><div class="t" style="left:1772px;top:776px">Use Spatial Splits</div>
<div class="c on" style="left:1746px;top:800px"></div><div class="t l" style="left:1772px;top:801px">Use Hair BVH</div>
<div class="b n pill" style="left:1743px;top:823px;width:144px;height:25px"></div>
<span class="nl" style="left:1750px;top:831px"></span><span class="nr" style="left:1875px;top:831px"></span>
<div class="t" style="left:1761px;top:826px">BVH Time Ste:</div><div class="t" style="left:1858px;top:826px">0</div>
<div class="hr" style="left:1582px;top:858px;width:312px"></div>
<div class="td" style="left:1591px;top:867px"></div>
<div class="t h2" style="left:1606px;top:864px">Post Processing</div>
<div class="dots s" style="left:1874px;top:869px"></div>
<div class="c on" style="left:1591px;top:899px"></div><div class="t l" style="left:1617px;top:900px">Compositing</div>
<div class="c on" style="left:1591px;top:926px"></div><div class="t l" style="left:1617px;top:927px">Sequencer</div>
<div class="b n pill" style="left:1743px;top:897px;width:144px;height:25px"></div>
<div style="left:1744px;top:898px;width:12px;height:23px;background:#6f6f6f;border-radius:11px 0 0 11px"></div>
<div class="t" style="left:1760px;top:900px">Dither:</div><div class="t" style="left:1831px;top:900px">0.000</div>
<div class="hr" style="left:1582px;top:959px;width:312px"></div>
<div class="td" style="left:1591px;top:968px"></div>
<div class="t h2" style="left:1606px;top:965px">Bake</div>
<div class="dots s" style="left:1874px;top:971px"></div>
<div class="b rr" style="left:1587px;top:998px;width:300px;height:25px;background:linear-gradient(#808080,#767676);border-color:#5c5c5c"></div>
<svg style="left:1591px;top:1000px" width="22" height="20" opacity=".5"><rect x="2" y="6" width="16" height="12" rx="1" fill="#999" stroke="#777"/><circle cx="10" cy="12" r="4" fill="none" stroke="#666"/><rect x="2" y="3" width="6" height="3" fill="#999"/><circle cx="19" cy="3" r="2" fill="#e9d27a"/></svg>
<div class="t d" style="left:1730px;top:1002px;color:#555">Bake</div>
<svg style="left:1578px;top:1012px" width="18" height="18"><path d="M0 2L16 18M0 6L12 18M0 10L8 18M0 14L4 18" stroke="#333"/></svg>
<div style="left:1898px;top:335px;width:17px;height:690px;background:#656565;border-radius:9px"></div>
<div style="left:1899px;top:758px;width:15px;height:197px;background:#8f8f8f;border-radius:8px"></div>

<!-- taskbar -->
<div style="left:0;top:1030px;width:1920px;height:50px;background:#0a0f17"></div>
<svg style="left:19px;top:1046px" width="22" height="20"><path d="M0 3L9 1.700V9.500H0ZM10 1.500L21 0V9.500H10ZM0 10.500H9V18.300L0 17ZM10 10.500H21V20L10 18.500Z" fill="#fff"/></svg>
<div style="left:60px;top:1030px;width:430px;height:50px;background:#f3f3f3"></div>
<div style="left:72px;top:1042px;box-sizing:border-box;width:26px;height:26px;border:3.500px solid #111;border-radius:50%"></div>
<div class="t" style="left:110px;top:1046px;font-size:17px;color:#3a3a3a">Type here to search</div>
<svg style="left:456px;top:1045px" width="16" height="22"><rect x="4.500" y="1" width="7" height="13" rx="3.500" fill="#555"/><path d="M1.500 9Q1.500 17 8 17Q14.500 17 14.500 9M8 17V21M4 21H12" stroke="#333" fill="none" stroke-width="1.300"/></svg>
<svg style="left:509px;top:1044px" width="22" height="22"><path d="M1 2H13M1 20H13" stroke="#fff"/><rect x="1.500" y="6.500" width="11" height="9" fill="none" stroke="#fff"/><path d="M18 2V6M18 9V13M18 16V20" stroke="#fff" stroke-width="1.500"/></svg>
<svg style="left:571px;top:1042px" width="28" height="28"><path d="M5 14C5 8 10 4 16 4C22 4 25 9 25 16H9C10 21 17 22 23 19V24C15 27 3 25 3 15ZM9 12H19C19 8 10 8 9 12Z" fill="#0f6cbd"/></svg>
<svg style="left:632px;top:1042px" width="29" height="28"><rect x="1" y="1" width="27" height="24" fill="#f1cd6a"/><rect x="1" y="1" width="11" height="5" fill="#e3b84a"/><path d="M5 25V14H24V25H19V19H10V25Z" fill="#4c9fc9"/></svg>
<svg style="left:692px;top:1038px" width="30" height="33"><rect x="1" y="8" width="28" height="24" fill="#fff"/><path d="M9 10V4Q15-2 21 4V10" fill="none" stroke="#bbb" stroke-width="1.500"/><rect x="8" y="14" width="6" height="6" fill="#e25a2e"/><rect x="16" y="14" width="6" height="6" fill="#7cbb3c"/><rect x="8" y="22" width="6" height="6" fill="#2f9ee0"/><rect x="16" y="22" width="6" height="6" fill="#f5b81e"/></svg>
<svg style="left:755px;top:1042px" width="31" height="26"><path d="M0 11L15 0L30 11V25H0Z" fill="#fff"/><path d="M1 11H29L11 17.500Z" fill="#111"/><path d="M1 12L11 18L8 25" fill="#fff"/></svg>
<div style="left:802px;top:1030px;width:61px;height:50px;background:#2f3640"></div>
<svg style="left:816px;top:1040px" width="32" height="30" viewBox="0 0 32 30"><path d="M1 18L11 11L8 9L13 8L9 1L20 6Q29 8 30 17Q29 27 18 27Q9 27 9 19L3 21Z" fill="#e8791f"/><circle cx="19" cy="16" r="6.500" fill="#fff"/><circle cx="19" cy="16" r="3.500" fill="#265787"/></svg>
<div style="left:880px;top:1041px;width:28px;height:28px;border-radius:50%;background:conic-gradient(#e04a3a 0 90deg,#f4c430 90deg 190deg,#4aa24e 190deg 300deg,#e04a3a 300deg)"></div>
<div style="left:887px;top:1048px;width:14px;height:14px;border-radius:50%;background:#4a86d8;border:2px solid #fff;box-sizing:content-box;margin:-2px 0 0 -2px"></div>
<div style="left:621px;top:1077px;width:51px;height:3px;background:#7aa6cf"></div>
<div style="left:683px;top:1077px;width:52px;height:3px;background:#7aa6cf"></div>
<div style="left:802px;top:1077px;width:61px;height:3px;background:#7aa6cf"></div>
<div style="left:869px;top:1077px;width:51px;height:3px;background:#7aa6cf"></div>
<svg style="left:1610px;top:1043px" width="22" height="22" fill="none" stroke="#fff" stroke-width="1.300"><circle cx="14" cy="6" r="3.500"/><path d="M9 14Q11 10 14 10Q18 10 20 15"/><circle cx="7" cy="11" r="3.500"/><path d="M1 20Q3 15 7 15Q11 15 13 20"/></svg>
<svg style="left:1656px;top:1049px" width="18" height="12"><path d="M1 10L9 2L17 10" fill="none" stroke="#fff" stroke-width="1.300"/></svg>
<svg style="left:1685px;top:1047px" width="22" height="16"><path d="M0 4H4M0 9H4" stroke="#fff"/><rect x="4" y="3" width="15" height="11" fill="#111" stroke="#fff"/><rect x="6" y="5" width="11" height="7" fill="#fff"/><rect x="20" y="6" width="2" height="5" fill="#fff"/></svg>
<svg style="left:1717px;top:1046px" width="18" height="18" fill="none" stroke="#ddd" stroke-width="1.100"><path d="M1 17Q1 3 17 2M4 17Q4 7 17 6M8 17Q8 11 17 10"/><circle cx="14" cy="15" r="1.500" fill="#fff" stroke="none"/></svg>
<svg style="left:1745px;top:1045px" width="22" height="20" fill="none" stroke="#ddd" stroke-width="1.200"><path d="M1 7H5L10 3V17L5 13H1Z"/><path d="M13 7Q15 10 13 13M16 4Q20 10 16 16"/></svg>
<div class="t tc" style="left:1812px;top:1034px;font-size:15px;color:#fff">9:36 PM</div>
<div class="t tc" style="left:1812px;top:1057px;font-size:15px;color:#fff">12/1/2018</div>
<svg style="left:1869px;top:1045px" width="20" height="19"><path d="M0 0H20V15H6L2 19V15H0Z" fill="#fff"/><path d="M4 4H16M4 8H16M4 12H16" stroke="#666"/></svg>
<div style="left:1878px;top:1055px;box-sizing:border-box;width:20px;height:20px;border-radius:50%;background:#333;border:1px solid #999"></div>
<div class="t tc" style="left:1888px;top:1055px;font-size:13px;font-weight:bold;color:#fff">5</div>
<div style="left:1915px;top:1030px;width:1px;height:50px;background:#444"></div>
</div></body></html>
